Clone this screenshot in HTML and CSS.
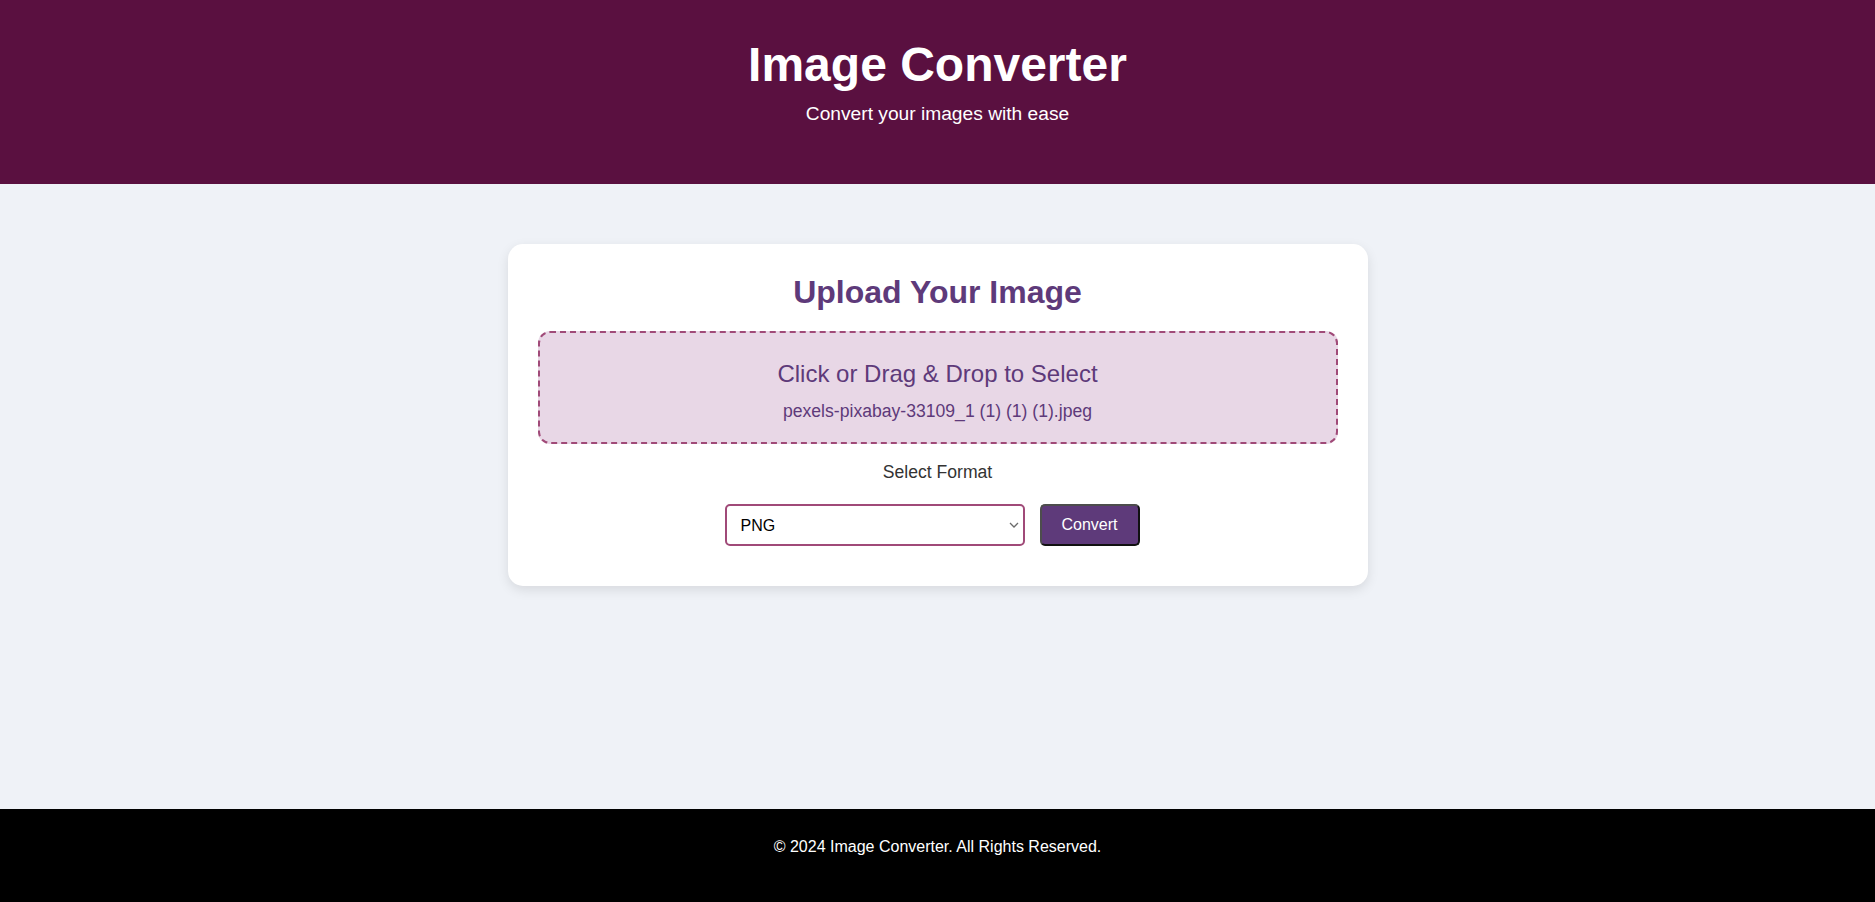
FILE: index.html
```html
<!DOCTYPE html>
<html lang="en">
<head>
<meta charset="utf-8">
<title>Image Converter</title>
<link rel="stylesheet" href="styles.css">
</head>
<body>
<header class="site-header">
  <h1 class="site-title">Image Converter</h1>
  <p class="site-subtitle">Convert your images with ease</p>
</header>
<main class="main">
  <section class="card">
    <h2 class="card-title">Upload Your Image</h2>
    <label class="dropzone">
      <span class="dropzone-text">Click or Drag &amp; Drop to Select</span>
      <span class="dropzone-file">pexels-pixabay-33109_1 (1) (1) (1).jpeg</span>
    </label>
    <p class="format-label">Select Format</p>
    <div class="controls">
      <div class="select-wrap">
        <select class="format-select">
          <option>PNG</option>
          <option>JPEG</option>
          <option>WEBP</option>
        </select>
        <svg class="select-arrow" width="10" height="6" viewBox="0 0 10 6" aria-hidden="true"><path d="M1 1 L5 5 L9 1" fill="none" stroke="#6b6b6b" stroke-width="1.3"/></svg>
      </div>
      <button class="convert-btn" type="button">Convert</button>
    </div>
  </section>
</main>
<footer class="site-footer">
  <p class="footer-text">© 2024 Image Converter. All Rights Reserved.</p>
</footer>
</body>
</html>
```
FILE: styles.css
```css
* { box-sizing: border-box; }
html, body { margin: 0; padding: 0; }
body {
  font-family: "Liberation Sans", Arial, sans-serif;
  background: #eff2f7;
  min-height: 100vh;
  display: flex;
  flex-direction: column;
}
.site-header {
  background: #5a1040;
  color: #ffffff;
  text-align: center;
  padding: 37px 20px 59px;
}
.site-title {
  margin: 0 0 11px;
  font-size: 48px;
  font-weight: bold;
}
.site-subtitle {
  margin: 0;
  font-size: 19.2px;
}
.main {
  flex: 1;
  display: flex;
  justify-content: center;
  align-items: flex-start;
  padding-top: 60px;
}
.card {
  width: 860px;
  background: #ffffff;
  border-radius: 15px;
  padding: 30px 30px 40px;
  box-shadow: 0 4px 12px rgba(0, 0, 0, 0.1);
  text-align: center;
  display: flex;
  flex-direction: column;
  align-items: stretch;
}
.card-title {
  margin: 0 0 20px;
  font-size: 32px;
  font-weight: bold;
  color: #5e3a7a;
}
.dropzone {
  display: flex;
  flex-direction: column;
  align-items: center;
  gap: 13px;
  background: #e8d7e6;
  border: 2px dashed #a04a78;
  border-radius: 12px;
  padding: 27px 20px 20px;
  color: #5e3a7a;
  cursor: pointer;
}
.dropzone-text { font-size: 24px; }
.dropzone-file { font-size: 17.6px; }
.format-label {
  margin: 18px 0 21px;
  font-size: 17.6px;
  color: #333333;
}
.controls {
  display: flex;
  justify-content: center;
  gap: 15px;
  padding-right: 11px;
}
.select-wrap {
  position: relative;
  width: 300px;
}
.format-select {
  appearance: none;
  -webkit-appearance: none;
  width: 300px;
  height: 42.4px;
  padding: 10px 30px 10px 14px;
  font-family: "Liberation Sans", Arial, sans-serif;
  font-size: 16px;
  color: #000000;
  background: #ffffff;
  border: 2px solid #a04a78;
  border-radius: 5px;
}
.select-arrow {
  position: absolute;
  right: 6px;
  top: 18px;
  pointer-events: none;
}
.convert-btn {
  width: 100px;
  height: 42.4px;
  padding: 10px 20px;
  font-family: "Liberation Sans", Arial, sans-serif;
  font-size: 16px;
  color: #ffffff;
  background: #5e3a7a;
  border: 2px solid;
  border-color: #4d4d4d #111111 #111111 #4d4d4d;
  border-radius: 5px;
  cursor: pointer;
}
.site-footer {
  background: #000000;
  color: #ffffff;
  text-align: center;
  padding: 29px 20px 46px;
}
.footer-text {
  margin: 0;
  font-size: 16px;
}
```
